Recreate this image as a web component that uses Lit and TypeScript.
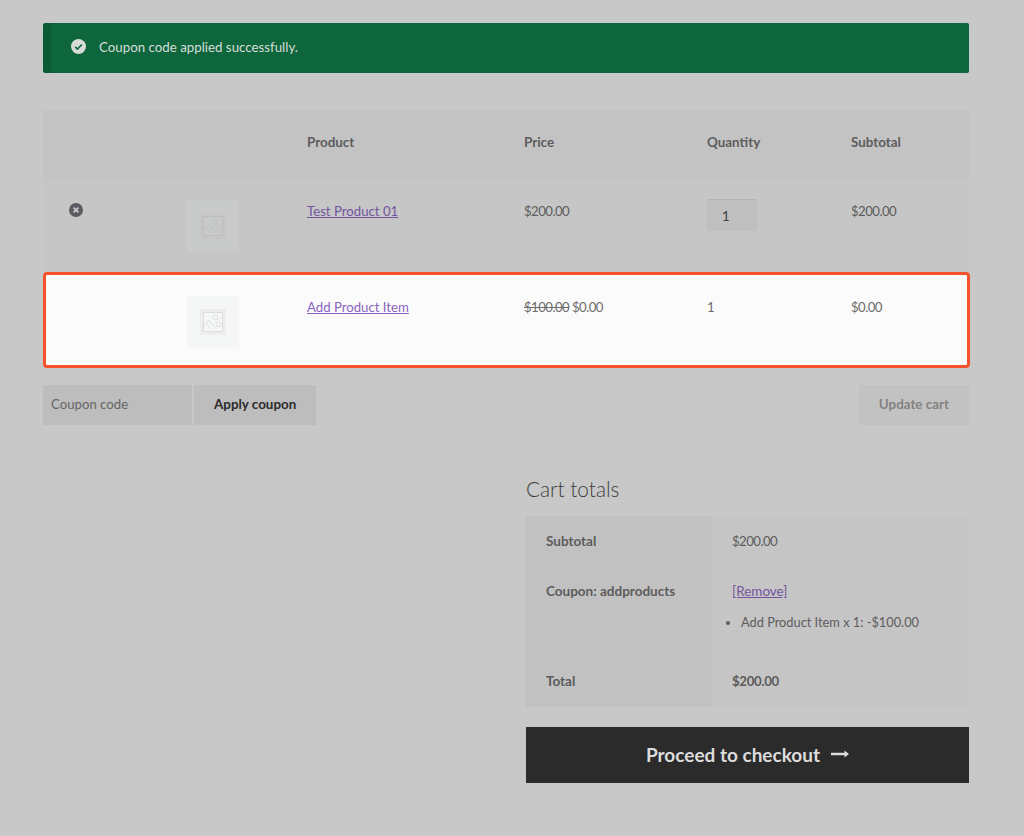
import { LitElement, css, html, svg } from "lit";
import { customElement } from "lit/decorators.js";

const placeholder = svg`
  <svg class="ph-icon" viewBox="0 0 26 26" fill="none">
    <rect x="1.5" y="1.5" width="23" height="23" stroke-width="3" opacity="0.28"></rect>
    <rect x="3.5" y="3.5" width="19" height="19" stroke-width="0.8"></rect>
    <circle cx="15.5" cy="8.5" r="2.4" stroke-width="0.7"></circle>
    <path d="M4 17l4.5-6 8 9" stroke-width="0.7"></path>
    <path d="M6 14.5l5 6" stroke-width="0.7"></path>
    <circle cx="18.5" cy="15.5" r="2.4" stroke-width="0.7"></circle>
  </svg>`;

@customElement("app-root")
export class AppRoot extends LitElement {
  static styles = css`
    :host {
      display: block;
      height: 836px;
      box-sizing: border-box;
      padding: 23px 55px 0 43px;
      background: #c8c8c8;
      font-family: Lato, "Liberation Sans", sans-serif;
      font-size: 13.2px;
      color: #5c5c5c;
      overflow: hidden;
    }

    .notice {
      display: flex;
      align-items: center;
      gap: 13px;
      height: 50px;
      box-sizing: border-box;
      padding: 0 0 3px 20px;
      border-left: 8px solid #0a5a34;
      border-radius: 2px;
      background: #0e673c;
      color: #d8dcd9;
      font-size: 13.3px;
    }

    .notice svg {
      width: 15px;
      height: 15px;
    }

    .cart {
      margin-top: 37px;
    }

    .row {
      display: grid;
      grid-template-columns: 118px 120px 217px 183px 144px 144px;
      background: #c6c6c6;
    }

    .row > div {
      padding-left: 26px;
    }

    .head {
      height: 68px;
      box-sizing: border-box;
      padding-bottom: 5px;
      align-items: center;
      background: #c3c3c3;
      font-size: 13.4px;
      font-weight: 700;
    }

    .item {
      height: 94px;
      padding-top: 22px;
      box-sizing: border-box;
    }

    .line {
      line-height: 22px;
    }

    .price {
      letter-spacing: -0.55px;
    }

    a {
      color: #74549f;
      text-decoration: underline;
    }

    .remove {
      width: 14px;
      height: 14px;
      margin-top: 3px;
    }

    .thumb {
      display: flex;
      align-items: center;
      justify-content: center;
      width: 52px;
      height: 52px;
      background: #c9cbca;
    }

    .ph-icon {
      width: 26px;
      height: 26px;
      stroke: #b9bbba;
    }

    .qty {
      width: 50px;
      height: 32px;
      margin-top: -1px;
      box-sizing: border-box;
      padding: 6px 0 0 15px;
      background: #bfbfbf;
      border-top: 1px solid #b5b5b5;
      color: #3d3d3d;
      line-height: 20px;
    }

    .highlight {
      height: 96px;
      padding-top: 21px;
      border: 3px solid #f4512c;
      border-radius: 4px;
      margin-right: -1px;
      background: #fbfbfb;
      color: #6d6d6d;
      grid-template-columns: 115px 120px 217px 183px 144px 144px;
    }

    .highlight a {
      color: #8a64c0;
    }

    .highlight .thumb {
      background: #f5f6f6;
    }

    .highlight .ph-icon {
      stroke: #d6d7d7;
    }

    s {
      text-decoration: line-through;
    }

    .actions {
      display: flex;
      align-items: center;
      gap: 2px;
      margin-top: 17px;
    }

    .coupon,
    .btn {
      height: 40px;
      display: flex;
      align-items: center;
      box-sizing: border-box;
      padding-bottom: 3px;
      background: #bdbdbd;
    }

    .coupon {
      width: 149px;
      padding-left: 8px;
      color: #666;
    }

    .btn {
      padding-left: 20px;
      padding-right: 20px;
      font-size: 13.4px;
      font-weight: 700;
      color: #2b2b2b;
    }

    .btn.off {
      margin-left: auto;
      background: #c2c2c2;
      color: #828282;
    }

    .totals {
      width: 443px;
      margin: 47px 0 0 auto;
    }

    h2 {
      margin: 0;
      height: 44px;
      font-size: 20.8px;
      font-weight: 300;
      line-height: 33px;
      color: #3d3d3d;
    }

    .trow {
      display: grid;
      grid-template-columns: 187px 1fr;
    }

    .trow > div {
      padding: 16px 0 0 20px;
      line-height: 18px;
    }

    .trow > div:first-child {
      background: #c1c1c1;
      font-size: 13.5px;
      font-weight: 700;
    }

    .trow > div:last-child {
      margin-left: 1px;
      padding-left: 18px;
      background: #c5c5c5;
    }

    .trow.sub {
      height: 50px;
    }

    .trow.coup {
      height: 90px;
    }

    .trow.total {
      height: 51px;
    }

    .trow.total b {
      font-weight: 700;
      letter-spacing: -0.3px;
    }

    .trow a {
      font-size: 13.5px;
    }

    ul {
      margin: 13px 0 0 9px;
      padding: 0;
      font-size: 12.8px;
    }

    .checkout {
      display: flex;
      align-items: center;
      justify-content: center;
      gap: 11px;
      height: 56px;
      box-sizing: border-box;
      padding-bottom: 2px;
      margin-top: 20px;
      background: #2b2b2b;
      color: #dcdcdc;
      font-size: 19px;
      font-weight: 700;
    }

    .checkout svg {
      width: 18px;
      height: 10px;
    }
  `;

  render() {
    return html`
      <div class="notice">
        <svg viewBox="0 0 16 16">
          <circle cx="8" cy="8" r="8" fill="#d8dcd9"></circle>
          <path d="M4.5 8.3l2.4 2.4 4.6-4.8" fill="none" stroke="#0e673c" stroke-width="1.8"></path>
        </svg>
        <span>Coupon code applied successfully.</span>
      </div>

      <div class="cart">
        <div class="row head">
          <div></div>
          <div></div>
          <div>Product</div>
          <div>Price</div>
          <div>Quantity</div>
          <div>Subtotal</div>
        </div>
        <div class="row item">
          <div>
            <svg class="remove" viewBox="0 0 14 14">
              <circle cx="7" cy="7" r="7" fill="#5a5a60"></circle>
              <path d="M4.6 4.6l4.8 4.8M9.4 4.6l-4.8 4.8" stroke="#c6c6c6" stroke-width="2"></path>
            </svg>
          </div>
          <div><div class="thumb">${placeholder}</div></div>
          <div class="line"><a href="#">Test Product 01</a></div>
          <div class="line price">$200.00</div>
          <div><div class="qty">1</div></div>
          <div class="line price">$200.00</div>
        </div>
        <div class="row item highlight">
          <div></div>
          <div><div class="thumb">${placeholder}</div></div>
          <div class="line"><a href="#">Add Product Item</a></div>
          <div class="line price"><s>$100.00</s> $0.00</div>
          <div class="line">1</div>
          <div class="line price">$0.00</div>
        </div>
        <div class="actions">
          <div class="coupon">Coupon code</div>
          <div class="btn">Apply coupon</div>
          <div class="btn off">Update cart</div>
        </div>
      </div>

      <div class="totals">
        <h2>Cart totals</h2>
        <div class="trow sub">
          <div>Subtotal</div>
          <div class="price">$200.00</div>
        </div>
        <div class="trow coup">
          <div>Coupon: addproducts</div>
          <div>
            <a href="#">[Remove]</a>
            <ul><li>Add Product Item x 1: -$100.00</li></ul>
          </div>
        </div>
        <div class="trow total">
          <div>Total</div>
          <div><b>$200.00</b></div>
        </div>
        <div class="checkout">
          <span>Proceed to checkout</span>
          <svg viewBox="0 0 18 10">
            <path d="M0 3.8h13.5V1.5L18 5l-4.5 3.5V6.2H0z" fill="#dcdcdc"></path>
          </svg>
        </div>
      </div>
    `;
  }
}
